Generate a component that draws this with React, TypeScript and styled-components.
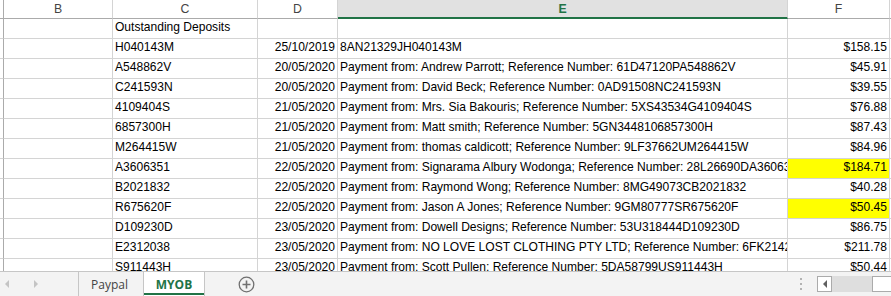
import React from 'react';
import styled, { createGlobalStyle } from 'styled-components';

const GlobalStyle = createGlobalStyle`
  html, body { margin: 0; padding: 0; background: #fff; }
  body { font-family: "Liberation Sans", Arial, sans-serif; }
`;

const GREEN = '#217346';
const GRID = '#d4d4d4';
const HEAD_LINE = '#ababab';

const Window = styled.div`
  width: 891px;
  height: 296px;
  display: flex;
  flex-direction: column;
  overflow: hidden;
  background: #fff;
`;

const Sheet = styled.div`
  height: 271px;
  flex: none;
  overflow: hidden;
  display: grid;
  grid-template-columns: 4px 109px 145px 80px 450px 102px 1fr;
  grid-template-rows: 19px;
  grid-auto-rows: 20px;
  align-content: start;
  font-size: 12.05px;
  color: #000;
`;

const Cell = styled.div<{ $right?: boolean; $fill?: string }>`
  box-sizing: border-box;
  border-right: 1px solid ${GRID};
  border-bottom: 1px solid ${GRID};
  padding: 0 2px;
  line-height: 16px;
  white-space: nowrap;
  overflow: hidden;
  text-align: ${(p) => (p.$right ? 'right' : 'left')};
  background: ${(p) => p.$fill || 'transparent'};
`;

const RowHead = styled.div<{ $top?: boolean }>`
  box-sizing: border-box;
  border-right: 1px solid ${HEAD_LINE};
  border-bottom: 1px solid ${(p) => (p.$top ? HEAD_LINE : GRID)};
  background: #fff;
`;

const ColHead = styled.div<{ $active?: boolean }>`
  box-sizing: border-box;
  border-right: 1px solid ${GRID};
  border-bottom: ${(p) => (p.$active ? `2px solid ${GREEN}` : `1px solid ${HEAD_LINE}`)};
  background: ${(p) => (p.$active ? '#e1e1e1' : '#fff')};
  color: ${(p) => (p.$active ? GREEN : '#444')};
  font-weight: ${(p) => (p.$active ? 700 : 400)};
  font-size: 12.3px;
  text-align: center;
  line-height: 18px;
`;

const TabBar = styled.div`
  height: 25px;
  flex: none;
  box-sizing: border-box;
  border-top: 1px solid #c6c6c6;
  background: #f3f3f3;
  display: flex;
  align-items: stretch;
  font-family: "Open Sans", "Noto Sans", sans-serif;
  font-size: 12px;
`;

const Nav = styled.div`
  width: 78px;
  display: flex;
  align-items: center;
  gap: 25px;
  padding-left: 5px;
  box-sizing: border-box;
`;

const Arrow = styled.span<{ $dir: 'left' | 'right'; $color?: string }>`
  width: 0;
  height: 0;
  border-top: 4px solid transparent;
  border-bottom: 4px solid transparent;
  ${(p) =>
    p.$dir === 'left'
      ? `border-right: 4px solid ${p.$color || '#c4c4c4'};`
      : `border-left: 4px solid ${p.$color || '#c4c4c4'};`}
`;

const Tab = styled.div<{ $active?: boolean; $width: number }>`
  width: ${(p) => p.$width}px;
  box-sizing: border-box;
  display: flex;
  align-items: center;
  justify-content: center;
  border-left: 1px solid #c6c6c6;
  ${(p) =>
    p.$active
      ? `
    background: #fff;
    border-right: 1px solid #c6c6c6;
    color: ${GREEN};
    font-weight: 700;
    box-shadow: inset 0 -1px 0 #fff, inset 0 -3px 0 ${GREEN};
  `
      : `
    color: #444;
    padding-right: 3px;
  `}
`;

const AddButton = styled.div`
  margin-left: 33px;
  display: flex;
  align-items: center;
`;

const Spacer = styled.div`
  flex: 1;
`;

const Dots = styled.div`
  display: flex;
  flex-direction: column;
  justify-content: center;
  gap: 3px;
  margin-right: 15px;
`;

const Dot = styled.span`
  width: 2px;
  height: 2px;
  background: #b3b3b3;
`;

const HScroll = styled.div`
  width: 74px;
  display: flex;
  align-items: center;
`;

const ScrollButton = styled.div`
  width: 15px;
  height: 16px;
  box-sizing: border-box;
  border: 1px solid ${HEAD_LINE};
  background: #fff;
  display: flex;
  align-items: center;
  justify-content: center;
`;

const Track = styled.div`
  width: 40px;
  height: 16px;
  background: #dedede;
`;

const Thumb = styled.div`
  flex: 1;
  height: 16px;
  box-sizing: border-box;
  border: 1px solid ${HEAD_LINE};
  border-right: none;
  background: #fff;
`;

type Row = { c: string; d?: string; e?: string; f?: string; hi?: boolean };

const rows: Row[] = [
  { c: 'Outstanding Deposits' },
  { c: 'H040143M', d: '25/10/2019', e: '8AN21329JH040143M', f: '$158.15' },
  { c: 'A548862V', d: '20/05/2020', e: 'Payment from: Andrew Parrott; Reference Number: 61D47120PA548862V', f: '$45.91' },
  { c: 'C241593N', d: '20/05/2020', e: 'Payment from: David Beck; Reference Number: 0AD91508NC241593N', f: '$39.55' },
  { c: '4109404S', d: '21/05/2020', e: 'Payment from: Mrs. Sia Bakouris; Reference Number: 5XS43534G4109404S', f: '$76.88' },
  { c: '6857300H', d: '21/05/2020', e: 'Payment from: Matt smith; Reference Number: 5GN3448106857300H', f: '$87.43' },
  { c: 'M264415W', d: '21/05/2020', e: 'Payment from: thomas caldicott; Reference Number: 9LF37662UM264415W', f: '$84.96' },
  { c: 'A3606351', d: '22/05/2020', e: 'Payment from: Signarama Albury Wodonga; Reference Number: 28L26690DA3606351', f: '$184.71', hi: true },
  { c: 'B2021832', d: '22/05/2020', e: 'Payment from: Raymond Wong; Reference Number: 8MG49073CB2021832', f: '$40.28' },
  { c: 'R675620F', d: '22/05/2020', e: 'Payment from: Jason A Jones; Reference Number: 9GM80777SR675620F', f: '$50.45', hi: true },
  { c: 'D109230D', d: '23/05/2020', e: 'Payment from: Dowell Designs; Reference Number: 53U318444D109230D', f: '$86.75' },
  { c: 'E2312038', d: '23/05/2020', e: 'Payment from: NO LOVE LOST CLOTHING PTY LTD; Reference Number: 6FK21428YE2312038', f: '$211.78' },
  { c: 'S911443H', d: '23/05/2020', e: 'Payment from: Scott Pullen; Reference Number: 5DA58799US911443H', f: '$50.44' },
];

const columns = ['B', 'C', 'D', 'E', 'F', 'G'];

export default function App() {
  return (
    <>
      <GlobalStyle />
      <Window>
        <Sheet>
          <RowHead $top />
          {columns.map((c) => (
            <ColHead key={c} $active={c === 'E'}>
              {c === 'G' ? '' : c}
            </ColHead>
          ))}
          {rows.map((r, i) => (
            <React.Fragment key={i}>
              <RowHead />
              <Cell />
              <Cell>{r.c}</Cell>
              <Cell $right>{r.d}</Cell>
              <Cell>{r.e}</Cell>
              <Cell $right $fill={r.hi ? '#ffff00' : undefined}>
                {r.f}
              </Cell>
              <Cell />
            </React.Fragment>
          ))}
        </Sheet>
        <TabBar>
          <Nav>
            <Arrow $dir="left" />
            <Arrow $dir="right" />
          </Nav>
          <Tab $width={65}>Paypal</Tab>
          <Tab $width={62} $active>
            MYOB
          </Tab>
          <AddButton>
            <svg width="17" height="17" viewBox="0 0 17 17">
              <circle cx="8.5" cy="8.5" r="7.3" fill="none" stroke="#707070" strokeWidth="1.3" />
              <path d="M8.5 4.5v8M4.5 8.5h8" stroke="#707070" strokeWidth="1.6" />
            </svg>
          </AddButton>
          <Spacer />
          <Dots>
            <Dot />
            <Dot />
            <Dot />
          </Dots>
          <HScroll>
            <ScrollButton>
              <Arrow $dir="left" $color="#606060" />
            </ScrollButton>
            <Track />
            <Thumb />
          </HScroll>
        </TabBar>
      </Window>
    </>
  );
}
